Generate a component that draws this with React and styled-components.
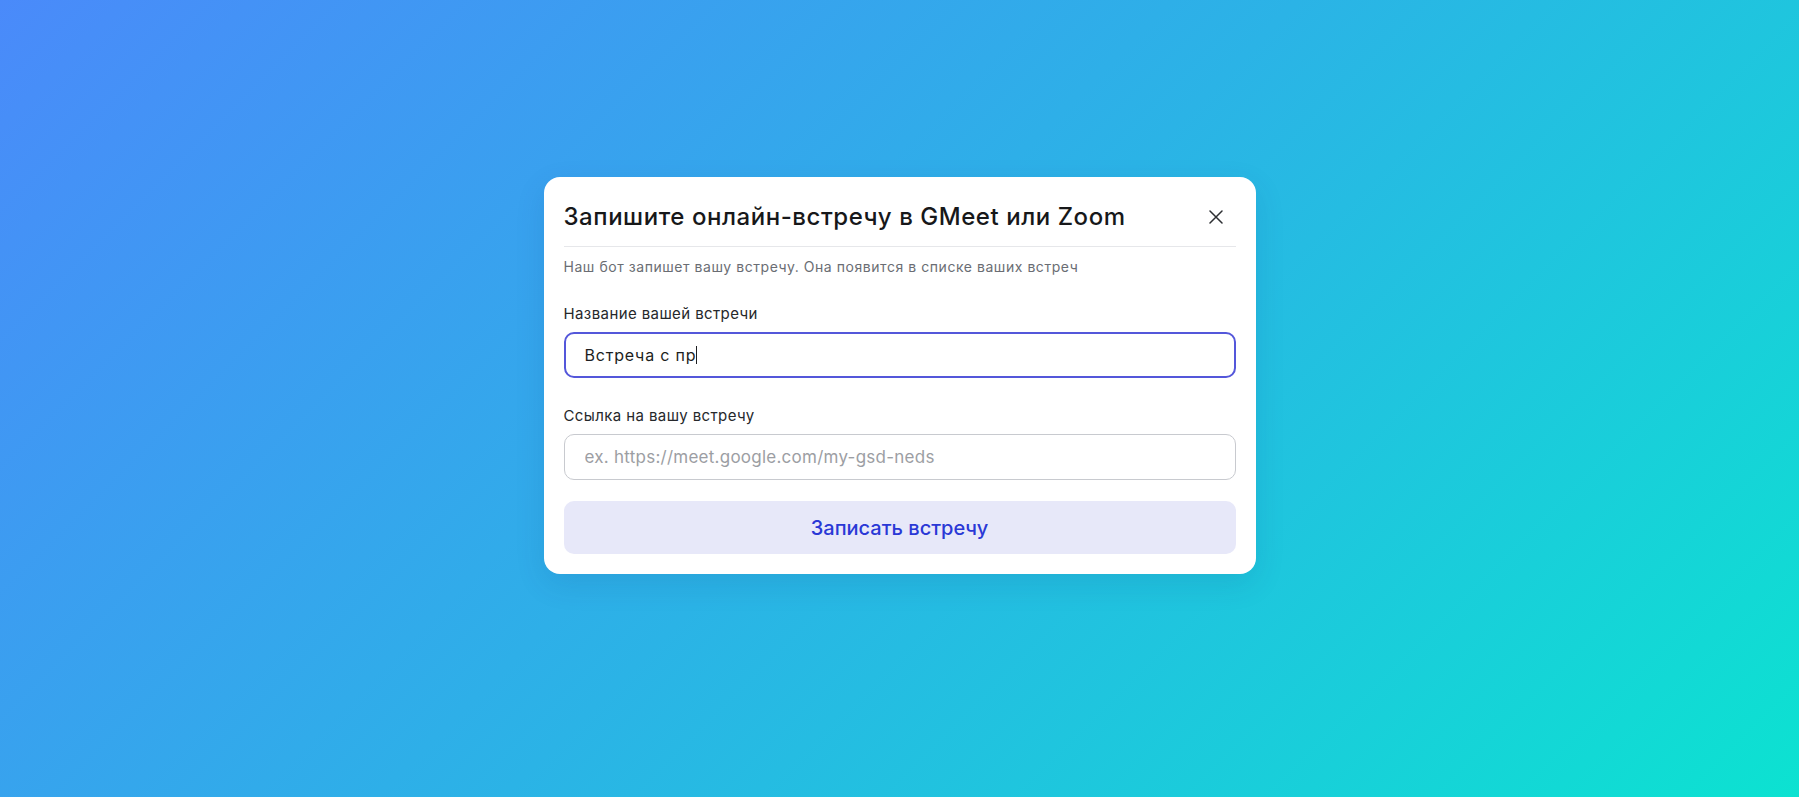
import React from "react";
import styled, { createGlobalStyle } from "styled-components";

const GlobalStyle = createGlobalStyle`
  * {
    box-sizing: border-box;
  }
  html,
  body {
    margin: 0;
    padding: 0;
  }
  body {
    font-family: Inter, "Noto Sans", "Liberation Sans", sans-serif;
    -webkit-font-smoothing: antialiased;
  }
`;

const Page = styled.div`
  display: flex;
  justify-content: center;
  align-items: flex-start;
  width: 100%;
  min-height: 100vh;
  padding-top: 177px;
  background: linear-gradient(135deg, #4a8afa 0%, #2bb3e6 50%, #0ce2d1 100%);
`;

const Modal = styled.div`
  display: flex;
  flex-direction: column;
  width: 712px;
  padding: 20px;
  background: #ffffff;
  border-radius: 16px;
  box-shadow: 0 10px 30px rgba(20, 60, 120, 0.12);
`;

const Header = styled.div`
  display: flex;
  align-items: center;
  justify-content: space-between;
  padding-bottom: 9px;
  border-bottom: 1px solid #e6e7ea;
`;

const Title = styled.h2`
  margin: 0;
  font-size: 24px;
  line-height: 40px;
  font-weight: 500;
  color: #17181a;
  letter-spacing: 0.55px;
`;

const CloseButton = styled.button`
  display: flex;
  align-items: center;
  justify-content: center;
  width: 32px;
  height: 32px;
  margin-right: 4px;
  padding: 0;
  border: none;
  background: transparent;
  color: #2d2f33;
  cursor: pointer;
`;

const Subtitle = styled.p`
  margin: 10px 0 0;
  font-size: 14px;
  line-height: 20px;
  letter-spacing: 0.55px;
  color: #6a6d73;
`;

const Group = styled.div`
  display: flex;
  flex-direction: column;
  gap: 8px;
  margin-top: ${(p) => p.$top}px;
`;

const Label = styled.label`
  font-size: 15px;
  line-height: 20px;
  letter-spacing: 0.4px;
  color: #26282b;
`;

const Field = styled.div`
  display: flex;
  align-items: center;
  height: 46px;
  padding: 0 19px;
  border: 2px solid #5457da;
  border-radius: 10px;
  font-size: 16px;
  letter-spacing: 0.8px;
  color: #1d1e21;
`;

const Caret = styled.span`
  display: inline-block;
  width: 1px;
  height: 18px;
  background: #1d1e21;
`;

const Input = styled.input`
  height: 46px;
  padding: 0 20px;
  border: 1px solid #c8cacf;
  border-radius: 10px;
  font-family: inherit;
  font-size: 17px;
  letter-spacing: 0.25px;
  color: #1d1e21;
  outline: none;
  &::placeholder {
    color: #9c9ea3;
  }
`;

const Submit = styled.button`
  height: 53px;
  margin-top: 21px;
  border: none;
  border-radius: 10px;
  background: #e7e8f9;
  font-family: inherit;
  font-size: 20px;
  font-weight: 500;
  color: #2a38d6;
  cursor: pointer;
`;

const CloseIcon = () => (
  <svg width="14" height="14" viewBox="0 0 14 14" fill="none">
    <path
      d="M1 1L13 13M13 1L1 13"
      stroke="currentColor"
      strokeWidth="1.5"
      strokeLinecap="round"
    />
  </svg>
);

const App = () => {
  return (
    <>
      <GlobalStyle />
      <Page>
        <Modal>
          <Header>
            <Title>Запишите онлайн-встречу в GMeet или Zoom</Title>
            <CloseButton aria-label="Закрыть">
              <CloseIcon />
            </CloseButton>
          </Header>
          <Subtitle>
            Наш бот запишет вашу встречу. Она появится в списке ваших встреч
          </Subtitle>

          <Group $top={27}>
            <Label>Название вашей встречи</Label>
            <Field>
              Встреча с пр
              <Caret />
            </Field>
          </Group>

          <Group $top={28}>
            <Label>Ссылка на вашу встречу</Label>
            <Input placeholder="ex. https://meet.google.com/my-gsd-neds" />
          </Group>

          <Submit>Записать встречу</Submit>
        </Modal>
      </Page>
    </>
  );
};

export default App;
